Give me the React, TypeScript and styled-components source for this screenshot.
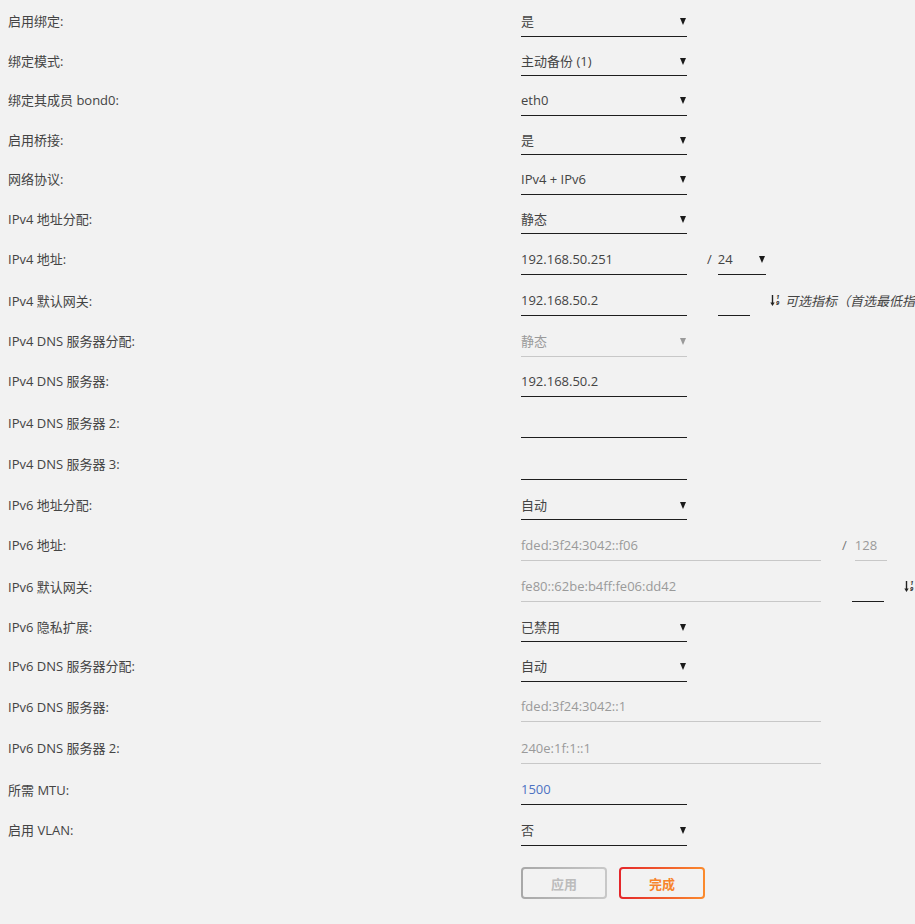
import React from 'react'
import styled, { createGlobalStyle, css } from 'styled-components'

const GlobalStyle = createGlobalStyle`
  html, body {
    margin: 0;
    padding: 0;
    background: #f2f2f2;
    overflow: hidden;
  }
  body {
    font-family: "Open Sans", "Noto Sans CJK SC", sans-serif;
    font-size: 13px;
    color: #444;
  }
`

const Page = styled.div`
  padding: 1px 0 0 8px;
  width: 1000px;
`

const Row = styled.div<{ $tall?: boolean }>`
  display: flex;
  align-items: center;
  height: ${(p) => (p.$tall ? 41.4 : 39.5)}px;
  white-space: nowrap;
`

const Label = styled.div`
  width: 513px;
  flex: none;
  color: #444;
`

const Controls = styled.div`
  display: flex;
  align-items: center;
`

const fieldBase = css<{ $width?: number; $disabled?: boolean }>`
  display: flex;
  align-items: center;
  box-sizing: border-box;
  height: 32px;
  padding-top: 1px;
  width: ${(p) => p.$width || 166}px;
  border-bottom: 1px solid ${(p) => (p.$disabled ? '#c8c8c8' : '#1e1e1e')};
  color: ${(p) => (p.$disabled ? '#9a9a9a' : '#444')};
`

const Select = styled.div<{ $width?: number; $disabled?: boolean }>`
  ${fieldBase}
  justify-content: space-between;
  padding-right: 1px;
`

const Input = styled.div<{ $width?: number; $disabled?: boolean; $blue?: boolean }>`
  ${fieldBase}
  ${(p) => p.$blue && 'color: #4d72c2;'}
`

const Arrow = styled.span<{ $disabled?: boolean }>`
  width: 0;
  height: 0;
  margin-top: 2px;
  border-left: 3.5px solid transparent;
  border-right: 3.5px solid transparent;
  border-top: 7px solid ${(p) => (p.$disabled ? '#9a9a9a' : '#1a1a1a')};
`

const Slash = styled.span<{ $gap: number; $after: number; $disabled?: boolean }>`
  margin-left: ${(p) => p.$gap}px;
  margin-right: ${(p) => p.$after}px;
  color: ${(p) => (p.$disabled ? '#777' : '#444')};
`

const Spacer = styled.span<{ $w: number }>`
  width: ${(p) => p.$w}px;
  flex: none;
`

const Hint = styled.span`
  display: flex;
  align-items: center;
  gap: 3px;
  margin-left: 20px;
  color: #444;
  font-style: italic;
  svg {
    flex: none;
  }
`

const Buttons = styled.div`
  display: flex;
  gap: 12px;
  margin: 18px 0 0 513px;
`

const Button = styled.button<{ $primary?: boolean }>`
  width: 86px;
  height: 32px;
  border: 2px solid transparent;
  border-radius: 4px;
  font-family: "Open Sans", "Noto Sans CJK SC", sans-serif;
  font-size: 13px;
  font-weight: 700;
  cursor: pointer;
  background: ${(p) =>
    p.$primary
      ? 'linear-gradient(#f2f2f2, #f2f2f2) padding-box, linear-gradient(90deg, #e4262b, #fb8b2d) border-box'
      : 'linear-gradient(#f2f2f2, #f2f2f2) padding-box, linear-gradient(90deg, #a8a8a8, #c8c8c8) border-box'};
  color: ${(p) => (p.$primary ? '#f7842b' : '#bcbcbc')};
`

type Field =
  | { kind: 'select'; value: string; disabled?: boolean }
  | { kind: 'input'; value: string; disabled?: boolean; width?: number; blue?: boolean }

const simpleRows: Array<[string, Field]> = [
  ['启用绑定:', { kind: 'select', value: '是' }],
  ['绑定模式:', { kind: 'select', value: '主动备份 (1)' }],
  ['绑定其成员 bond0:', { kind: 'select', value: 'eth0' }],
  ['启用桥接:', { kind: 'select', value: '是' }],
  ['网络协议:', { kind: 'select', value: 'IPv4 + IPv6' }],
  ['IPv4 地址分配:', { kind: 'select', value: '静态' }],
]

const midRows: Array<[string, Field]> = [
  ['IPv4 DNS 服务器分配:', { kind: 'select', value: '静态', disabled: true }],
  ['IPv4 DNS 服务器:', { kind: 'input', value: '192.168.50.2' }],
  ['IPv4 DNS 服务器 2:', { kind: 'input', value: '' }],
  ['IPv4 DNS 服务器 3:', { kind: 'input', value: '' }],
  ['IPv6 地址分配:', { kind: 'select', value: '自动' }],
]

const lateRows: Array<[string, Field]> = [
  ['IPv6 隐私扩展:', { kind: 'select', value: '已禁用' }],
  ['IPv6 DNS 服务器分配:', { kind: 'select', value: '自动' }],
  ['IPv6 DNS 服务器:', { kind: 'input', value: 'fded:3f24:3042::1', disabled: true, width: 300 }],
  ['IPv6 DNS 服务器 2:', { kind: 'input', value: '240e:1f:1::1', disabled: true, width: 300 }],
  ['所需 MTU:', { kind: 'input', value: '1500', blue: true }],
  ['启用 VLAN:', { kind: 'select', value: '否' }],
]

const FieldView: React.FC<{ field: Field }> = ({ field }) =>
  field.kind === 'select' ? (
    <Select $disabled={field.disabled}>
      <span>{field.value}</span>
      <Arrow $disabled={field.disabled} />
    </Select>
  ) : (
    <Input $disabled={field.disabled} $width={field.width} $blue={field.blue}>
      {field.value}
    </Input>
  )

const renderRows = (rows: Array<[string, Field]>) =>
  rows.map(([label, field]) => (
    <Row key={label} $tall={field.kind === 'input'}>
      <Label>{label}</Label>
      <Controls>
        <FieldView field={field} />
      </Controls>
    </Row>
  ))

// sort-numeric icon: down arrow with a tiny 1 over 9
const SortIcon: React.FC = () => (
  <svg width="12" height="13" viewBox="0 0 12 13">
    <path d="M2.5 1v8.5" stroke="#222" strokeWidth="1.4" />
    <path d="M0.3 8.6h4.4L2.5 12z" fill="#222" />
    <text x="6.2" y="5.2" fontSize="5.5" fontFamily="Open Sans, sans-serif" fontWeight="700" fill="#222">1</text>
    <text x="6" y="11.4" fontSize="6" fontFamily="Open Sans, sans-serif" fontWeight="700" fill="#222">9</text>
  </svg>
)

const MetricHint: React.FC = () => (
  <Hint>
    <SortIcon />
    <span>可选指标（首选最低指标）</span>
  </Hint>
)

export default function App() {
  return (
    <>
      <GlobalStyle />
      <Page>
        {renderRows(simpleRows)}
        <Row $tall>
          <Label>IPv4 地址:</Label>
          <Controls>
            <Input>192.168.50.251</Input>
            <Slash $gap={20} $after={6}>/</Slash>
            <Select $width={48}>
              <span>24</span>
              <Arrow />
            </Select>
          </Controls>
        </Row>
        <Row $tall>
          <Label>IPv4 默认网关:</Label>
          <Controls>
            <Input>192.168.50.2</Input>
            <Spacer $w={31} />
            <Input $width={32} />
            <MetricHint />
          </Controls>
        </Row>
        {renderRows(midRows)}
        <Row $tall>
          <Label>IPv6 地址:</Label>
          <Controls>
            <Input $width={300} $disabled>fded:3f24:3042::f06</Input>
            <Slash $gap={21} $after={8} $disabled>/</Slash>
            <Input $width={32} $disabled>128</Input>
          </Controls>
        </Row>
        <Row $tall>
          <Label>IPv6 默认网关:</Label>
          <Controls>
            <Input $width={300} $disabled>fe80::62be:b4ff:fe06:dd42</Input>
            <Spacer $w={31} />
            <Input $width={32} />
            <MetricHint />
          </Controls>
        </Row>
        {renderRows(lateRows)}
        <Buttons>
          <Button>应用</Button>
          <Button $primary>完成</Button>
        </Buttons>
      </Page>
    </>
  )
}
